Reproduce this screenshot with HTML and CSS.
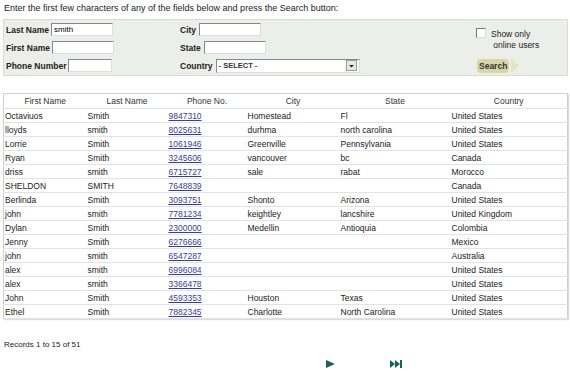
FILE: index.html
```html
<!DOCTYPE html>
<html lang="en">
<head>
    <meta charset="UTF-8">
    <title>User Search</title>
    <link rel="stylesheet" href="styles.css">
</head>
<body>
    <p class="intro">Enter the first few characters of any of the fields below and press the Search button:</p>

    <div class="search-panel">
        <div class="field-col left-col">
            <div class="field"><label>Last Name</label><input type="text" class="w62" value="smith"></div>
            <div class="field"><label>First Name</label><input type="text" class="w62"></div>
            <div class="field"><label>Phone Number</label><input type="text" class="w44"></div>
        </div>
        <div class="field-col mid-col">
            <div class="field"><label>City</label><input type="text" class="w62"></div>
            <div class="field"><label>State</label><input type="text" class="w62"></div>
            <div class="field"><label>Country</label>
                <div class="select"><span>- SELECT -</span><span class="select-btn"><svg width="7" height="7" viewBox="0 0 7 7"><path d="M1 3h5L3.5 5.5z" fill="#222"/></svg></span></div>
            </div>
        </div>
        <div class="right-col">
            <div class="online">
                <span class="checkbox"></span>
                <span class="online-text">Show only<br>&nbsp;online users</span>
            </div>
            <div class="search-btn-wrap">
                <span class="search-btn">Search</span>
                <svg width="8" height="15" viewBox="0 0 8 15"><path d="M0 0L8 7.5L0 15z" fill="#e6e4bf"/></svg>
            </div>
        </div>
    </div>

    <table class="results">
        <colgroup>
            <col style="width:83px">
            <col style="width:81px">
            <col style="width:79px">
            <col style="width:93px">
            <col style="width:111px">
            <col>
        </colgroup>
        <thead>
            <tr>
                <th>First Name</th>
                <th>Last Name</th>
                <th>Phone No.</th>
                <th>City</th>
                <th>State</th>
                <th>Country</th>
            </tr>
        </thead>
        <tbody id="rows"></tbody>
    </table>

    <p class="records">Records 1 to 15 of 51</p>

    <div class="pager">
        <svg class="next" width="9" height="8" viewBox="0 0 9 8"><path d="M0 0L9 4L0 8z" fill="#17615f"/></svg>
        <svg class="last" width="12" height="8" viewBox="0 0 12 8"><path d="M0 0L5 4L0 8zM5 0L10 4L5 8z" fill="#17615f"/><rect x="10" y="0" width="2" height="8" fill="#17615f"/></svg>
    </div>

    <script>
        // rows of the current result page
        const data = [
            ['Octaviuos', 'Smith', '9847310', 'Homestead', 'Fl', 'United States'],
            ['lloyds', 'smith', '8025631', 'durhma', 'north carolina', 'United States'],
            ['Lorrie', 'Smith', '1061946', 'Greenville', 'Pennsylvania', 'United States'],
            ['Ryan', 'Smith', '3245606', 'vancouver', 'bc', 'Canada'],
            ['driss', 'smith', '6715727', 'sale', 'rabat', 'Morocco'],
            ['SHELDON', 'SMITH', '7648839', '', '', 'Canada'],
            ['Berlinda', 'Smith', '3093751', 'Shonto', 'Arizona', 'United States'],
            ['john', 'smith', '7781234', 'keightley', 'lancshire', 'United Kingdom'],
            ['Dylan', 'Smith', '2300000', 'Medellin', 'Antioquia', 'Colombia'],
            ['Jenny', 'Smith', '6276666', '', '', 'Mexico'],
            ['john', 'smith', '6547287', '', '', 'Australia'],
            ['alex', 'smith', '6996084', '', '', 'United States'],
            ['alex', 'smith', '3366478', '', '', 'United States'],
            ['John', 'Smith', '4593353', 'Houston', 'Texas', 'United States'],
            ['Ethel', 'Smith', '7882345', 'Charlotte', 'North Carolina', 'United States']
        ];

        const tbody = document.getElementById('rows');
        data.forEach(row => {
            const tr = document.createElement('tr');
            tr.innerHTML = `
                <td>${row[0]}</td>
                <td>${row[1]}</td>
                <td><a href="#">${row[2]}</a></td>
                <td>${row[3]}</td>
                <td>${row[4]}</td>
                <td>${row[5]}</td>
            `;
            tbody.appendChild(tr);
        });
    </script>
</body>
</html>
```
FILE: styles.css
```css
body {
    font-family: "Liberation Sans", Arial, sans-serif;
    font-size: 8.5px;
    margin: 0;
    padding: 0 2px 0 3px;
    background-color: #fff;
    color: #222;
}

.intro {
    margin: 0;
    padding: 3px 0 0 1px;
    height: 16px;
    box-sizing: border-box;
    font-size: 9px;
}

.search-panel {
    display: flex;
    height: 55px;
    margin-top: 3px;
    background-color: #eceeea;
    border: 1px solid #d9dbd7;
}

.field-col {
    display: flex;
    flex-direction: column;
    gap: 5px;
    padding-top: 3px;
}

.left-col {
    width: 174px;
    padding-left: 2px;
}

.mid-col {
    width: 294px;
}

.field {
    display: flex;
    align-items: center;
    height: 13px;
}

.field label {
    font-weight: bold;
    margin-right: 2px;
}

.mid-col .field label {
    margin-right: 3px;
}

.field input {
    font-family: inherit;
    font-size: 8px;
    height: 13px;
    box-sizing: border-box;
    padding: 0 2px;
    border: 1px solid #888;
    border-right-color: #ddd;
    border-bottom-color: #ddd;
    background: #fff;
}

.w62 {
    width: 62px;
}

.w44 {
    width: 44px;
}

.select {
    display: flex;
    align-items: center;
    justify-content: space-between;
    width: 144px;
    height: 14px;
    box-sizing: border-box;
    border: 1px solid #888;
    border-right-color: #ddd;
    border-bottom-color: #ddd;
    background: #fff;
    font-size: 7.5px;
    font-weight: bold;
    color: #333;
    padding-left: 2px;
}

.select-btn {
    display: flex;
    align-items: center;
    justify-content: center;
    width: 9px;
    height: 9px;
    margin-right: 2px;
    border: 1px solid #999;
    background: #e8e8e8;
}

.right-col {
    padding: 8px 0 0 2px;
}

.online {
    display: flex;
    align-items: flex-start;
    height: 30px;
}

.checkbox {
    width: 8px;
    height: 8px;
    border: 1px solid #777;
    border-right-color: #ddd;
    border-bottom-color: #ddd;
    background: #fff;
    margin-right: 5px;
}

.online-text {
    line-height: 11px;
    margin-top: 1px;
}

.search-btn-wrap {
    display: flex;
    align-items: center;
    gap: 2px;
    padding-left: 1px;
}

.search-btn {
    background-color: #d8d6a6;
    border-radius: 4px;
    font-weight: bold;
    font-size: 8.5px;
    color: #333;
    padding: 1px 2px;
    line-height: 12px;
}

.results {
    width: 565px;
    margin-top: 17px;
    border-collapse: collapse;
    table-layout: fixed;
    border: 1px solid #cfcfcf;
    box-shadow: 1px 1px 1px #ddd;
}

.results th, .results td {
    height: 13px;
    padding: 0 1px;
    border-bottom: 1px solid #e3e3e3;
    white-space: nowrap;
    overflow: hidden;
}

.results th {
    font-weight: normal;
    text-align: center;
    color: #333;
    height: 14px;
}

.results td {
    text-align: left;
    color: #222;
}

.results a {
    color: #3b3ba8;
}

.records {
    margin: 21px 0 0 1px;
    font-size: 8px;
}

.pager {
    display: flex;
    align-items: center;
    gap: 55px;
    padding: 11px 0 0 323px;
}
```
